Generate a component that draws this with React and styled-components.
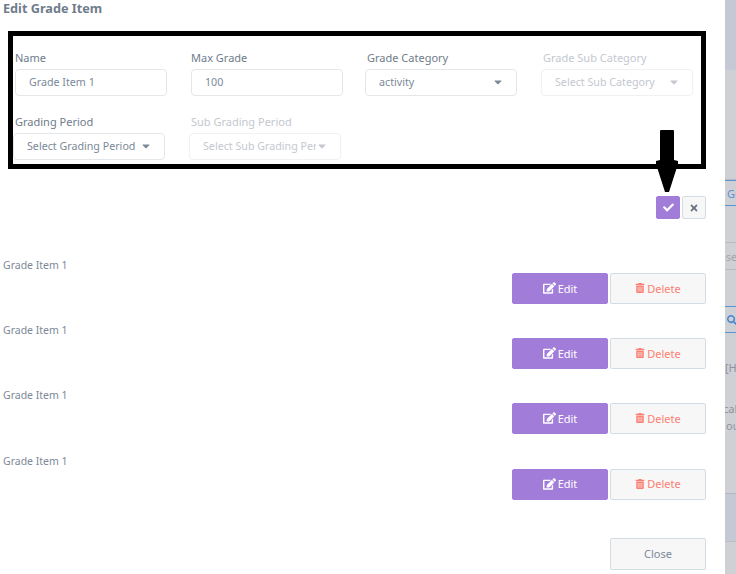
import React from "react";
import styled, { createGlobalStyle } from "styled-components";
import { FaCaretDown, FaCheck, FaEdit, FaSearch, FaTimes, FaTrashAlt } from "react-icons/fa";

const GlobalStyle = createGlobalStyle`
  html, body {
    margin: 0;
    height: 574px;
    overflow: hidden;
    background: #cfd0d6;
  }
  body, button {
    font-family: "Noto Sans", "Open Sans", sans-serif;
  }
`;

const App = () => {
  return (
    <Page>
      <GlobalStyle />
      <Modal>
        <Title>Edit Grade Item</Title>
        <Form>
          <Field>
            <Label>Name</Label>
            <Input>Grade Item 1</Input>
          </Field>
          <Field>
            <Label>Max Grade</Label>
            <Input>100</Input>
          </Field>
          <Field>
            <Label>Grade Category</Label>
            <Select>
              activity
              <FaCaretDown />
            </Select>
          </Field>
          <Field>
            <Label $disabled>Grade Sub Category</Label>
            <Select $disabled>
              Select Sub Category
              <FaCaretDown />
            </Select>
          </Field>
          <Field>
            <Label>Grading Period</Label>
            <Select>
              Select Grading Period
              <FaCaretDown />
            </Select>
          </Field>
          <Field>
            <Label $disabled>Sub Grading Period</Label>
            <Select $disabled>
              <Clip>Select Sub Grading Period</Clip>
              <FaCaretDown />
            </Select>
          </Field>
        </Form>
        <Arrow viewBox="0 0 24 62" aria-hidden="true">
          <path d="M5 1q0-1 1-1h12q1 0 1 1v29l4 1v3l-9 28h-4L1 34v-3l4-1z" />
        </Arrow>
        <Actions>
          <IconButton $primary>
            <FaCheck />
          </IconButton>
          <IconButton>
            <FaTimes />
          </IconButton>
        </Actions>
        <List>
          {[1, 2, 3, 4].map((id) => (
            <Row key={id}>
              <ItemName>Grade Item 1</ItemName>
              <RowButtons>
                <EditButton>
                  <FaEdit />
                  Edit
                </EditButton>
                <DeleteButton>
                  <FaTrashAlt />
                  Delete
                </DeleteButton>
              </RowButtons>
            </Row>
          ))}
        </List>
        <Footer>
          <CloseButton>Close</CloseButton>
        </Footer>
      </Modal>
      <Behind>
        <Band $h={70} $bg="#c5c9d5" />
        <Band $h={90} />
        <Band $h={20} $line="#b9bbc3" />
        <Band $h={26} $line="#5b93d6" $top="#5b93d6" $color="#5b8fd0">Gr</Band>
        <Band $h={37} $line="#b9bbc3" />
        <Band $h={27} $line="#b9bbc3" $color="#a3a5ad" $shift={-8}>ose</Band>
        <Band $h={37} $line="#5b93d6" />
        <Band $h={26} $line="#5b93d6" $color="#4a86d0"><FaSearch /></Band>
        <Band $h={25} />
        <Band $h={18} $color="#8f929c" $shift={-2}>[He</Band>
        <Band $h={24} />
        <Band $h={17} $color="#8f929c" $shift={-4}>cal</Band>
        <Band $h={16} $color="#8f929c" $shift={-1}>ou</Band>
        <Band $h={60} />
        <Band $h={48} $bg="#c5c9d5" $top="#b3b5bc" />
        <Band $h={42} $top="#bcbec6" />
      </Behind>
    </Page>
  );
};

const Page = styled.div`
  display: flex;
  width: 736px;
  height: 574px;
  overflow: hidden;
`;

const Modal = styled.div`
  position: relative;
  flex: 0 0 725px;
  box-sizing: border-box;
  height: 574px;
  padding: 0 19px 0 3px;
  background: #fff;
`;

const Title = styled.div`
  height: 16px;
  font-size: 12.7px;
  line-height: 17px;
  font-weight: 700;
  color: #6f7c8b;
`;

const Form = styled.div`
  display: grid;
  grid-template-columns: repeat(4, 152px);
  column-gap: 24px;
  row-gap: 18px;
  align-content: start;
  box-sizing: border-box;
  height: 138px;
  margin: 15px 0 0 5px;
  padding: 14px 0 0 2px;
  border: 5px solid #000;
`;

const Field = styled.div`
  display: flex;
  flex-direction: column;
`;

const Label = styled.div`
  height: 16px;
  margin-bottom: 3px;
  font-size: 11px;
  line-height: 16px;
  white-space: nowrap;
  color: ${(p) => (p.$disabled ? "#c3c8cf" : "#6f7c8b")};
`;

const Input = styled.div`
  box-sizing: border-box;
  height: 27px;
  padding-left: 13px;
  border: 1px solid #e4e7ea;
  border-radius: 4px;
  font-size: 10.7px;
  line-height: 24px;
  color: #7c8998;
`;

const Select = styled.div`
  display: flex;
  align-items: center;
  justify-content: space-between;
  box-sizing: border-box;
  width: 152px;
  height: 27px;
  margin-left: -2px;
  padding: 0 12px 1px 13px;
  border: 1px solid ${(p) => (p.$disabled ? "#f0f1f3" : "#e4e7ea")};
  border-radius: 4px;
  font-size: 10.7px;
  white-space: nowrap;
  color: ${(p) => (p.$disabled ? "#c3c8cf" : "#7c8998")};

  svg {
    flex: none;
    width: 12px;
    height: 12px;
  }
`;

const Clip = styled.span`
  overflow: hidden;
  width: 113px;
`;

const Arrow = styled.svg`
  position: absolute;
  left: 655px;
  top: 130px;
  width: 24px;
  height: 62px;
  fill: #000;
`;

const Actions = styled.div`
  display: flex;
  justify-content: flex-end;
  gap: 2px;
  margin-top: 27px;
`;

const IconButton = styled.button`
  display: flex;
  align-items: center;
  justify-content: center;
  box-sizing: border-box;
  width: 24px;
  height: 23px;
  padding: 0;
  border: 1px solid ${(p) => (p.$primary ? "#a27cd9" : "#d3dde6")};
  border-radius: 2px;
  background: ${(p) => (p.$primary ? "#a27cd9" : "#f7f7f7")};
  color: ${(p) => (p.$primary ? "#fff" : "#66717f")};

  svg {
    width: ${(p) => (p.$primary ? "11px" : "10px")};
    height: ${(p) => (p.$primary ? "11px" : "10px")};
  }
`;

const List = styled.div`
  margin-top: 38px;
`;

const Row = styled.div`
  display: flex;
  justify-content: space-between;
  height: 65.2px;
`;

const ItemName = styled.div`
  font-size: 10.5px;
  line-height: 16px;
  color: #7c8998;
`;

const RowButtons = styled.div`
  display: flex;
  gap: 2px;
  margin-top: 16px;
`;

const BaseButton = styled.button`
  display: flex;
  align-items: center;
  justify-content: center;
  gap: 2px;
  box-sizing: border-box;
  width: 96px;
  height: 31px;
  padding: 0 0 1px;
  border-radius: 2px;
  font-size: 11px;

  svg {
    width: 10px;
    height: 10px;
  }
`;

const EditButton = styled(BaseButton)`
  border: 1px solid #a27cd9;
  background: #a27cd9;
  color: #fff;

  svg {
    width: 13px;
    height: 12px;
  }
`;

const DeleteButton = styled(BaseButton)`
  border: 1px solid #d3dde6;
  background: #f7f7f7;
  color: #fb7f73;
`;

const Footer = styled.div`
  display: flex;
  justify-content: flex-end;
  margin-top: 20.4px;
`;

const CloseButton = styled(BaseButton)`
  height: 32px;
  padding-bottom: 2px;
  border: 1px solid #d3dde6;
  background: #f7f7f7;
  color: #7c8998;
`;

const Behind = styled.div`
  flex: 0 0 11px;
  display: flex;
  flex-direction: column;
  overflow: hidden;
`;

const Band = styled.div`
  flex: 0 0 ${(p) => p.$h}px;
  display: flex;
  align-items: center;
  box-sizing: border-box;
  padding-left: 2px;
  overflow: hidden;
  white-space: nowrap;
  font-size: 11px;
  text-indent: ${(p) => p.$shift || 0}px;
  background: ${(p) => p.$bg || "#cfd0d6"};
  color: ${(p) => p.$color || "#8f929c"};
  border-top: ${(p) => (p.$top ? `1px solid ${p.$top}` : "0")};
  border-bottom: ${(p) => (p.$line ? `1px solid ${p.$line}` : "0")};

  svg {
    flex: none;
    width: 10px;
    height: 10px;
  }
`;

export default App;
